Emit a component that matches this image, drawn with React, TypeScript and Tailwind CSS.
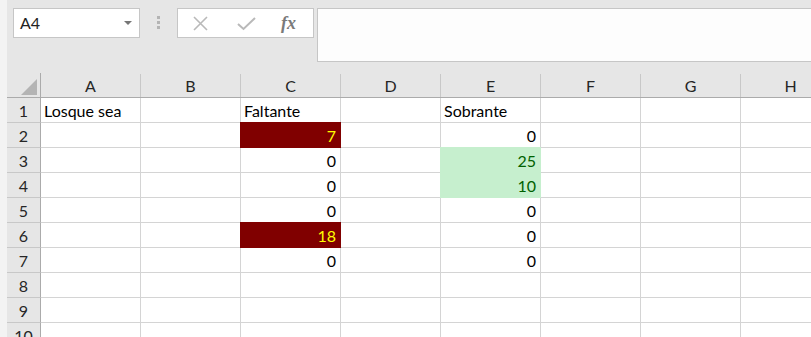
import React from "react";

const COLS = ["A", "B", "C", "D", "E", "F", "G", "H"];

type Cell = { v: string; align?: "l" | "r"; fill?: "red" | "green" };

const DATA: Record<number, Record<string, Cell>> = {
  1: { A: { v: "Losque sea" }, C: { v: "Faltante" }, E: { v: "Sobrante" } },
  2: { C: { v: "7", align: "r", fill: "red" }, E: { v: "0", align: "r" } },
  3: { C: { v: "0", align: "r" }, E: { v: "25", align: "r", fill: "green" } },
  4: { C: { v: "0", align: "r" }, E: { v: "10", align: "r", fill: "green" } },
  5: { C: { v: "0", align: "r" }, E: { v: "0", align: "r" } },
  6: { C: { v: "18", align: "r", fill: "red" }, E: { v: "0", align: "r" } },
  7: { C: { v: "0", align: "r" }, E: { v: "0", align: "r" } },
};

const ROWS = [1, 2, 3, 4, 5, 6, 7, 8, 9, 10];

function GridCell({ cell }: { cell?: Cell }) {
  return (
    <div className="relative h-[25px] w-[100px] shrink-0 border-r border-b border-[#d4d4d4]">
      {cell?.fill === "red" && (
        <div className="absolute -top-px -left-px -right-px -bottom-px z-10 bg-[#800000]" />
      )}
      {cell?.fill === "green" && (
        <div className="absolute -top-px -left-px -right-px -bottom-px z-10 bg-[#c6efce]" />
      )}
      {cell && (
        <div
          className={`absolute inset-0 z-20 flex items-end pb-[1px] leading-[20px] ${
            cell.align === "r" ? "justify-end pr-[4px]" : "justify-start pl-[3px]"
          } ${
            cell.fill === "red"
              ? "text-[#ffff00]"
              : cell.fill === "green"
              ? "text-[#006100]"
              : "text-black"
          }`}
        >
          {cell.v}
        </div>
      )}
    </div>
  );
}

export default function App() {
  return (
    <div className="flex h-[337px] w-[811px] overflow-hidden bg-[#e6e6e6] font-['Lato','Liberation_Sans',sans-serif] text-[16px]">
      <div className="w-[7px] shrink-0 bg-[#f3f3f3]" />
      <div className="flex min-w-0 flex-1 flex-col">
        {/* Toolbar */}
        <div className="flex h-[73px] shrink-0 items-start pl-[6px] pt-[8px]">
          <div className="relative flex h-[30px] w-[127px] shrink-0 items-center border border-[#c6c6c6] bg-white pl-[6px] text-[#222]">
            <span className="leading-none">A4</span>
            <div className="absolute right-[7px] top-[12px] h-0 w-0 border-x-[4px] border-t-[4px] border-x-transparent border-t-[#767676]" />
          </div>
          <div className="ml-[17px] flex w-[3px] shrink-0 flex-col gap-[2px] pt-[8px]">
            <div className="h-[3px] w-[3px] bg-[#b4b4b4]" />
            <div className="h-[3px] w-[3px] bg-[#b4b4b4]" />
            <div className="h-[3px] w-[3px] bg-[#b4b4b4]" />
          </div>
          <div className="ml-[17px] flex h-[30px] w-[137px] shrink-0 items-center border border-[#c6c6c6] bg-white">
            <svg className="ml-[15px]" width="15" height="15" viewBox="0 0 15 15">
              <path d="M1 1 L14 14 M14 1 L1 14" stroke="#b9b9b9" strokeWidth="1.6" fill="none" />
            </svg>
            <svg className="ml-[29px]" width="19" height="15" viewBox="0 0 19 15">
              <path d="M1 8 L6.5 13 L18 2" stroke="#b9b9b9" strokeWidth="2" fill="none" />
            </svg>
            <span className="ml-[25px] font-['Liberation_Serif',serif] text-[18px] font-bold italic leading-none text-[#7a7a7a]">
              fx
            </span>
          </div>
          <div className="ml-[3px] h-[54px] w-[520px] shrink-0 border border-[#c6c6c6] bg-[#fdfdfd]" />
        </div>

        {/* Column header row */}
        <div className="flex h-[25px] shrink-0 border-b border-[#ababab]">
          <div className="relative w-[34px] shrink-0 border-r border-[#ababab]">
            <div className="absolute bottom-[2px] right-[3px] h-0 w-0 border-b-[16px] border-l-[16px] border-b-[#b4b4b4] border-l-transparent" />
          </div>
          {COLS.map((c) => (
            <div
              key={c}
              className="mt-[1px] flex w-[100px] shrink-0 items-center justify-center border-r border-[#c8c8c8] text-[#262626]"
            >
              {c}
            </div>
          ))}
        </div>

        {/* Rows */}
        {ROWS.map((r) => (
          <div key={r} className="flex shrink-0">
            <div className="flex h-[25px] w-[34px] shrink-0 items-end justify-center border-r border-b border-r-[#ababab] border-b-[#c8c8c8] pb-[1px] leading-[20px] text-[#262626]">
              {r}
            </div>
            <div className="flex bg-white">
              {COLS.map((c) => (
                <GridCell key={c} cell={DATA[r]?.[c]} />
              ))}
            </div>
          </div>
        ))}
      </div>
    </div>
  );
}
